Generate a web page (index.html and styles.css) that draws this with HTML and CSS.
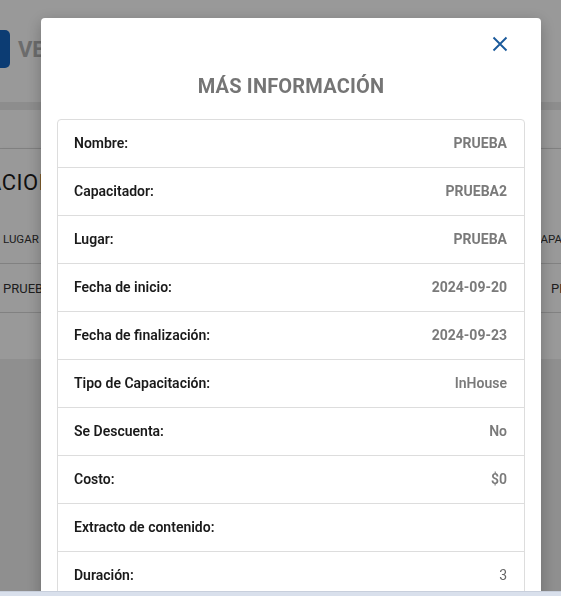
FILE: index.html
```html
<!DOCTYPE html>
<html lang="es">
<head>
<meta charset="utf-8">
<title>Más información</title>
<link rel="stylesheet" href="styles.css">
</head>
<body>
<div class="page">
  <header class="topbar">
    <span class="menu-btn"></span>
    <span class="brand">VER CAPACITACIONES</span>
  </header>
  <div class="gap"></div>
  <div class="tabs"></div>
  <section class="card">
    <h2 class="card-title">CAPACITACIONES</h2>
    <div class="thead">
      <span class="col-left">LUGAR</span>
      <span class="col-right">CAPACITADOR</span>
    </div>
    <div class="trow">
      <span class="col-left">PRUEBA</span>
      <span class="col-right">PRUEBA2</span>
    </div>
  </section>
</div>

<div class="overlay">
  <div class="modal">
    <button class="close" aria-label="Cerrar">
      <svg width="16" height="16" viewBox="0 0 16 16"><path d="M1.5 1.5 L14.5 14.5 M14.5 1.5 L1.5 14.5" stroke="#1b5a9b" stroke-width="1.9" fill="none"/></svg>
    </button>
    <h1 class="modal-title">MÁS INFORMACIÓN</h1>
    <div class="info">
      <div class="row"><span class="label">Nombre:</span><span class="value strong">PRUEBA</span></div>
      <div class="row"><span class="label">Capacitador:</span><span class="value strong">PRUEBA2</span></div>
      <div class="row"><span class="label">Lugar:</span><span class="value strong">PRUEBA</span></div>
      <div class="row"><span class="label">Fecha de inicio:</span><span class="value strong">2024-09-20</span></div>
      <div class="row"><span class="label">Fecha de finalización:</span><span class="value strong">2024-09-23</span></div>
      <div class="row"><span class="label">Tipo de Capacitación:</span><span class="value">InHouse</span></div>
      <div class="row"><span class="label">Se Descuenta:</span><span class="value">No</span></div>
      <div class="row"><span class="label">Costo:</span><span class="value">$0</span></div>
      <div class="row"><span class="label">Extracto de contenido:</span><span class="value"></span></div>
      <div class="row"><span class="label">Duración:</span><span class="value plain">3</span></div>
    </div>
  </div>
</div>
<div class="statusbar"></div>
</body>
</html>
```
FILE: styles.css
```css
html, body {
  margin: 0;
  padding: 0;
  height: 100%;
  overflow: hidden;
}
body {
  font-family: Roboto, "Liberation Sans", Arial, sans-serif;
  background: #eeeeee;
}
.page {
  display: flex;
  flex-direction: column;
  width: 561px;
  overflow: hidden;
}
.topbar {
  height: 102px;
  background: #ffffff;
  display: flex;
  align-items: center;
  gap: 8px;
}
.menu-btn {
  flex: none;
  width: 30px;
  height: 38px;
  margin-left: -20px;
  margin-top: -4px;
  background: #1565c0;
  border-radius: 5px;
}
.brand {
  white-space: nowrap;
  font-size: 22px;
  font-weight: 700;
  color: #b4b4b4;
  margin-top: -4px;
}
.gap {
  height: 8px;
  background: #ebebeb;
}
.tabs {
  height: 38px;
  background: #ffffff;
  border-bottom: 1px solid #dcdcdc;
}
.card {
  background: #ffffff;
  height: 210px;
  box-shadow: 0 2px 4px rgba(0,0,0,0.25);
  display: flex;
  flex-direction: column;
}
.card-title {
  margin: 0;
  padding-top: 21px;
  height: 66px;
  box-sizing: border-box;
  margin-left: -104px;
  white-space: nowrap;
  font-size: 22px;
  font-weight: 400;
  letter-spacing: 0.5px;
  color: #1c1c1c;
}
.thead, .trow {
  display: flex;
  align-items: center;
  height: 48px;
  border-bottom: 1px solid #d8d8d8;
  font-size: 11.5px;
  color: #333;
  white-space: nowrap;
}
.trow {
  font-size: 13px;
}
.col-left { flex: none; box-sizing: border-box; padding-left: 3px; }
.thead .col-left { width: 533px; }
.trow .col-left { width: 551px; }
.col-right { flex: none; }

.overlay {
  position: fixed;
  inset: 0;
  background: rgba(0,0,0,0.4);
}
.modal {
  position: absolute;
  left: 41px;
  top: 18px;
  width: 500px;
  height: 640px;
  background: #ffffff;
  border-radius: 4px;
  box-shadow: 0 4px 16px rgba(0,0,0,0.25);
  padding: 0 16px;
  box-sizing: border-box;
  display: flex;
  flex-direction: column;
}
.close {
  position: absolute;
  right: 33px;
  top: 18px;
  width: 16px;
  height: 16px;
  padding: 0;
  border: 0;
  background: none;
  display: block;
}
.close svg { display: block; }
.modal-title {
  margin: 0;
  padding-top: 56px;
  height: 101px;
  box-sizing: border-box;
  text-align: center;
  font-size: 20px;
  font-weight: 700;
  color: #757575;
  letter-spacing: 0.2px;
}
.info {
  border: 1px solid #dddddd;
  border-radius: 4px;
}
.row {
  display: flex;
  justify-content: space-between;
  align-items: center;
  height: 48px;
  box-sizing: border-box;
  padding: 0 17px 2px 16px;
  border-bottom: 1px solid #dddddd;
  font-size: 14px;
}
.label {
  font-weight: 600;
  color: #1a1a1a;
}
.value {
  font-weight: 600;
  color: #7a7a7a;
}
.value.strong { font-weight: 700; }
.value.plain { font-weight: 400; color: #666; }
.statusbar {
  position: fixed;
  left: 0;
  right: 0;
  bottom: 0;
  height: 4px;
  background: #d9e0ec;
  border-top: 1px solid #c8cfdc;
}
```
